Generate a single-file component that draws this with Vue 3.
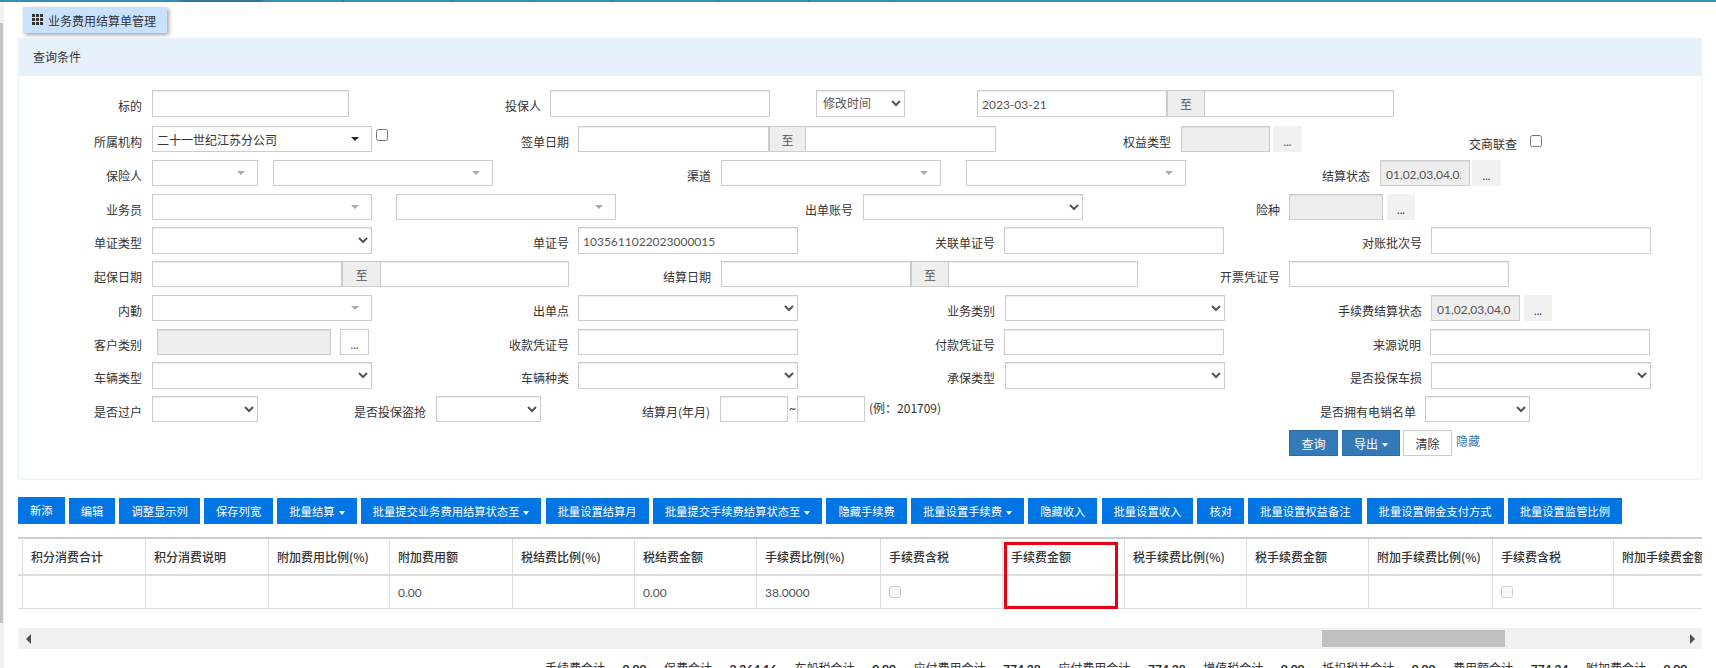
<script setup>
import { computed } from 'vue'

const T = (t, end) => ({ k: 'label', t, end })
const I = (x, end, v = '') => ({ k: 'input', x, end, v })
const D = (x, end, v = '') => ({ k: 'dis', x, end, v })
const S = (x, end, v = '') => ({ k: 'select', x, end, v })
const C = (x, end, v = '') => ({ k: 'combo', x, end, v })
const A = (x, end) => ({ k: 'addon', x, end, v: '至' })
const B = (x, end, framed = false) => ({ k: 'more', x, end, framed })

const source = [
  { h: 27, gap: 14, items: [T('标的', 142), I(152, 349), T('投保人', 541), I(550, 770), S(816, 905, '修改时间'), I(977, 1167, '2023-03-21'), A(1167, 1204), I(1204, 1394)] },
  { h: 26, gap: 9, items: [T('所属机构', 142), C(152, 372, '二十一世纪江苏分公司'), { k: 'check', x: 376, end: 388 }, T('签单日期', 569), I(578, 769), A(769, 805), I(805, 996), T('权益类型', 1171), D(1181, 1270), B(1273, 1302), { k: 'label', t: '交商联查', end: 1517, low: true }, { k: 'check', x: 1530, end: 1542, low: true }] },
  { h: 26, gap: 8, items: [T('保险人', 142), C(152, 258), C(273, 493), T('渠道', 711), C(721, 941), C(966, 1186), T('结算状态', 1370), D(1380, 1470, '01,02,03,04,05'), B(1472, 1501)] },
  { h: 26, gap: 8, items: [T('业务员', 142), C(152, 372), C(396, 616), T('出单账号', 853), S(863, 1083), T('险种', 1280), D(1289, 1383), B(1387, 1415)] },
  { h: 27, gap: 7, items: [T('单证类型', 142), S(152, 372), T('单证号', 569), I(578, 798, '1035611022023000015'), T('关联单证号', 995), I(1004, 1224), T('对账批次号', 1422), I(1431, 1651)] },
  { h: 26, gap: 7, items: [T('起保日期', 142), I(152, 342), A(342, 380), I(380, 569), T('结算日期', 711), I(721, 911), A(911, 948), I(948, 1138), T('开票凭证号', 1280), I(1289, 1509)] },
  { h: 26, gap: 8, items: [T('内勤', 142), C(152, 372), T('出单点', 569), S(578, 798), T('业务类别', 995), S(1005, 1225), T('手续费结算状态', 1422), D(1431, 1520, '01,02,03,04,05'), B(1524, 1552)] },
  { h: 26, gap: 8, items: [T('客户类别', 142), D(157, 331), B(340, 369, true), T('收款凭证号', 569), I(578, 798), T('付款凭证号', 995), I(1004, 1224), T('来源说明', 1421), I(1430, 1650)] },
  { h: 27, gap: 7, items: [T('车辆类型', 142), S(152, 372), T('车辆种类', 569), S(578, 798), T('承保类型', 995), S(1005, 1225), T('是否投保车损', 1422), S(1431, 1651)] },
  { h: 26, gap: 7, items: [T('是否过户', 142), S(152, 258), T('是否投保盗抢', 426), S(436, 541), T('结算月(年月)', 710), I(720, 788), { k: 'tilde', x: 789, end: 797, v: '~' }, I(797, 865), { k: 'note', x: 869, end: 1000, v: '(例：201709)' }, T('是否拥有电销名单', 1416), S(1425, 1530)] }
]

const rows = computed(() =>
  source.map((row) => {
    let prev = 19
    const items = row.items.map((it) => {
      const left = it.k === 'label' ? 0 : it.x - prev
      const width = it.k === 'label' ? it.end - prev : it.end - it.x
      prev = it.end
      return { ...it, style: { marginLeft: left + 'px', width: width + 'px' } }
    })
    return { items, style: { height: row.h + 'px', marginTop: row.gap + 'px' } }
  })
)

const tools = [
  { t: '新添', first: true }, { t: '编辑' }, { t: '调整显示列' }, { t: '保存列宽' },
  { t: '批量结算', caret: true }, { t: '批量提交业务费用结算状态至', caret: true }, { t: '批量设置结算月' },
  { t: '批量提交手续费结算状态至', caret: true }, { t: '隐藏手续费' }, { t: '批量设置手续费', caret: true },
  { t: '隐藏收入' }, { t: '批量设置收入' }, { t: '核对' }, { t: '批量设置权益备注' },
  { t: '批量设置佣金支付方式' }, { t: '批量设置监管比例' }
]

const edges = [18, 23, 146, 269, 390, 513, 635, 757, 881, 1003, 1125, 1247, 1369, 1493, 1614, 1736]
const widths = edges.slice(1).map((e, i) => e - edges[i])
const cols = [
  { h: '' }, { h: '积分消费合计' }, { h: '积分消费说明' }, { h: '附加费用比例(%)' },
  { h: '附加费用额', v: '0.00' }, { h: '税结费比例(%)' }, { h: '税结费金额', v: '0.00' },
  { h: '手续费比例(%)', v: '38.0000' }, { h: '手续费含税', check: true }, { h: '手续费金额' },
  { h: '税手续费比例(%)' }, { h: '税手续费金额' }, { h: '附加手续费比例(%)' },
  { h: '手续费含税', check: true }, { h: '附加手续费金额' }
]

const totals = [
  ['手续费合计', '0.00'], ['保费合计', '2,364.16'], ['车船税合计', '0.00'], ['应付费用合计', '774.38'],
  ['应付费用合计', '774.38'], ['增值税合计', '0.00'], ['抵扣税并合计', '0.00'], ['费用额合计', '774.34'], ['附加费合计', '0.00']
]

const topSegments = [181, 82, 81, 108, 82, 79, 106, 90, 82]
</script>

<template>
  <div class="page">
    <div class="top-bar">
      <span v-for="(w, i) in topSegments" :key="i" class="seg" :class="{ dark: i === 1 }" :style="{ width: w + 'px' }"></span>
    </div>
    <div class="side-track"><div class="side-thumb"></div></div>

    <div class="tab">
      <svg class="tab-icon" width="12" height="12" viewBox="0 0 12 12">
        <g fill="#333">
          <rect x="0" y="0" width="3" height="3" /><rect x="4" y="0" width="3" height="3" /><rect x="8" y="0" width="3" height="3" />
          <rect x="0" y="4" width="3" height="3" /><rect x="4" y="4" width="3" height="3" /><rect x="8" y="4" width="3" height="3" />
          <rect x="0" y="8" width="3" height="3" /><rect x="4" y="8" width="3" height="3" /><rect x="8" y="8" width="3" height="3" />
        </g>
      </svg>
      <span>业务费用结算单管理</span>
    </div>

    <section class="panel">
      <header class="panel-head">查询条件</header>
      <div class="panel-body">
        <div v-for="(row, r) in rows" :key="r" class="row" :style="row.style">
          <template v-for="(it, i) in row.items" :key="i">
            <label v-if="it.k === 'label'" class="label" :class="{ low: it.low }" :style="it.style">{{ it.t }}</label>
            <input v-else-if="it.k === 'input'" class="ctl" type="text" :value="it.v" :style="it.style" />
            <input v-else-if="it.k === 'dis'" class="ctl dis" type="text" disabled :value="it.v" :style="it.style" />
            <select v-else-if="it.k === 'select'" class="ctl sel" :style="it.style">
              <option>{{ it.v }}</option>
            </select>
            <div v-else-if="it.k === 'combo'" class="ctl combo" :class="{ filled: it.v }" :style="it.style">
              <span>{{ it.v }}</span><i class="tri"></i>
            </div>
            <div v-else-if="it.k === 'addon'" class="addon" :style="it.style">{{ it.v }}</div>
            <button v-else-if="it.k === 'more'" class="more" :class="{ framed: it.framed }" type="button" :style="it.style">...</button>
            <input v-else-if="it.k === 'check'" class="check" :class="{ low: it.low }" type="checkbox" :style="it.style" />
            <span v-else-if="it.k === 'tilde'" class="tilde" :style="it.style">{{ it.v }}</span>
            <span v-else-if="it.k === 'note'" class="note" :style="it.style">{{ it.v }}</span>
          </template>
        </div>
        <div class="actions">
          <button class="act primary query" type="button">查询</button>
          <button class="act primary export" type="button">导出<i class="caret"></i></button>
          <button class="act clear" type="button">清除</button>
          <a class="hide-link">隐藏</a>
        </div>
      </div>
    </section>

    <div class="toolbar">
      <button v-for="b in tools" :key="b.t" class="tool" :class="{ first: b.first }" type="button">
        {{ b.t }}<i v-if="b.caret" class="caret"></i>
      </button>
    </div>

    <div class="table-wrap">
      <table class="grid">
        <colgroup><col v-for="(w, i) in widths" :key="i" :style="{ width: w + 'px' }" /></colgroup>
        <thead>
          <tr><th v-for="(c, i) in cols" :key="i">{{ c.h }}</th></tr>
        </thead>
        <tbody>
          <tr>
            <td v-for="(c, i) in cols" :key="i">
              <input v-if="c.check" class="cell-check" type="checkbox" disabled />
              <template v-else>{{ c.v }}</template>
            </td>
          </tr>
        </tbody>
      </table>
      <div class="mark"></div>
    </div>

    <div class="hscroll">
      <i class="arrow left"></i>
      <div class="track"><div class="thumb"></div></div>
      <i class="arrow right"></i>
    </div>

    <div class="totals">
      <span v-for="(t, i) in totals" :key="i" class="total"><span>{{ t[0] }}</span><b>{{ t[1] }}</b></span>
    </div>
  </div>
</template>

<style>
html, body { margin: 0; height: 668px; overflow: hidden; background: #fff; }
</style>

<style scoped>
.page {
  position: relative;
  width: 1716px;
  height: 668px;
  overflow: hidden;
  box-sizing: border-box;
  padding-left: 18px;
  font-family: Lato, "Noto Sans CJK SC", sans-serif;
  font-size: 12px;
  color: #333;
}
.top-bar {
  position: absolute;
  left: 0; top: 0; right: 0;
  height: 2px;
  background: #3a8bb5;
  display: flex;
}
.seg { box-sizing: border-box; height: 2px; border-right: 1px solid #35799f; }
.seg.dark { background: #33799f; }
.side-track { position: absolute; left: 0; top: 2px; bottom: 0; width: 4px; background: #f1f1f1; }
.side-thumb { margin-top: 21px; width: 3px; height: 600px; background: #c4c4c4; }

.tab {
  box-sizing: border-box;
  margin: 7px 0 5px 5px;
  width: 144px;
  height: 26px;
  display: flex;
  align-items: center;
  padding-left: 9px;
  background: #c8e1ff;
  box-shadow: 2px 2px 4px rgba(0, 0, 0, .35);
  white-space: nowrap;
}
.tab-icon { margin-right: 4px; flex: none; }

.panel {
  box-sizing: border-box;
  width: 1684px;
  height: 442px;
  border: 1px solid #e6f1fb;
}
.panel-head {
  height: 37px;
  line-height: 37px;
  padding-left: 14px;
  background: #e6f1fb;
}
.panel-body { display: flow-root; }
.row { display: flex; align-items: stretch; }
.label {
  box-sizing: border-box;
  flex: none;
  font-family: "Noto Sans CJK SC", sans-serif;
  text-align: right;
  line-height: 26px;
  padding-top: 3px;
  white-space: nowrap;
}
.label.low { padding-top: 5px; }
.ctl {
  box-sizing: border-box;
  flex: none;
  height: 100%;
  margin: 0;
  border: 1px solid #ccc;
  border-radius: 0;
  background: #fff;
  padding: 2px 6px 0 4px;
  font: inherit;
  color: #555;
  outline: none;
  box-shadow: inset 0 1px 1px rgba(0, 0, 0, .075);
}
.ctl.dis { background: #eee; color: #555; padding-left: 5px; padding-right: 8px; }
.ctl.sel { padding: 0 2px; }
.combo {
  position: relative;
  display: flex;
  align-items: center;
  padding: 0 4px;
  color: #333;
  box-shadow: none;
}
.tri {
  position: absolute;
  right: 12px;
  top: 50%;
  margin-top: -2px;
  border-left: 4px solid transparent;
  border-right: 4px solid transparent;
  border-top: 4px solid #aaa;
}
.combo.filled .tri { border-top-color: #222; }
.addon {
  box-sizing: border-box;
  flex: none;
  display: flex;
  align-items: center;
  justify-content: center;
  background: #eee;
  border-top: 1px solid #ccc;
  border-bottom: 1px solid #ccc;
  border-left: 1px solid #ccc;
  color: #555;
}
.more {
  box-sizing: border-box;
  flex: none;
  height: 100%;
  padding: 4px 0 0;
  border: 0;
  background: #f1f1f1;
  font: inherit;
  font-size: 11px;
  color: #333;
}
.more.framed { background: #fff; border: 1px solid #ccc; }
.check { flex: none; height: 12px; margin: 3px 0 0; }
.check.low { margin-top: 9px; }
.tilde { flex: none; line-height: 26px; }
.note { flex: none; line-height: 24px; font-family: "Noto Sans CJK SC", sans-serif; }

.actions { display: flex; margin: 8px 0 0 1270px; height: 26px; }
.act {
  box-sizing: border-box;
  height: 26px;
  margin: 0 4px 0 0;
  padding: 0;
  font: inherit;
  border: 1px solid #ccc;
  background: #fff;
  color: #333;
}
.act.primary { background: #337ab7; border-color: #2e6da4; color: #fff; }
.query { width: 49px; }
.export { width: 58px; margin-right: 3px; }
.clear { width: 49px; }
.hide-link { color: #337ab7; line-height: 24px; }

.caret {
  display: inline-block;
  margin-left: 4px;
  vertical-align: middle;
  border-left: 3.5px solid transparent;
  border-right: 3.5px solid transparent;
  border-top: 4px solid #fff;
}

.toolbar { display: flex; align-items: flex-end; gap: 4.1px; margin-top: 17px; height: 27px; }
.tool {
  box-sizing: border-box;
  height: 26px;
  padding: 0 12px;
  border: 0;
  background: #0075e3;
  color: #fff;
  font: inherit;
  font-size: 11.3px;
  white-space: nowrap;
}
.tool.first { height: 27px; padding-bottom: 2px; }

.table-wrap { position: relative; width: 1684px; margin-top: 13px; overflow: hidden; }
.grid { table-layout: fixed; width: 1718px; border-collapse: separate; border-spacing: 0; }
.grid th, .grid td {
  box-sizing: border-box;
  padding: 0 0 0 8px;
  border-right: 1px solid #ddd;
  text-align: left;
  white-space: nowrap;
  overflow: hidden;
}
.grid th {
  height: 39px;
  border-top: 2px solid #ccc;
  border-bottom: 2px solid #ddd;
  font-family: "Noto Sans CJK SC", sans-serif;
  font-weight: 500;
}
.grid td { height: 33px; border-bottom: 1px solid #ddd; color: #555; }
.grid th:first-child, .grid td:first-child { padding: 0; }
.cell-check { display: block; width: 12px; height: 12px; margin: 0; }
.mark {
  position: absolute;
  left: 986px;
  top: 5px;
  width: 114px;
  height: 67px;
  box-sizing: border-box;
  border: 3px solid #e60012;
}

.hscroll {
  display: flex;
  align-items: center;
  width: 1684px;
  height: 21px;
  margin-top: 19px;
  background: #f1f1f1;
}
.arrow { flex: none; width: 0; height: 0; border-top: 5px solid transparent; border-bottom: 5px solid transparent; }
.arrow.left { margin-left: 8px; border-right: 5px solid #505050; }
.arrow.right { margin-right: 7px; border-left: 5px solid #505050; }
.track { flex: 1; height: 17px; }
.thumb { width: 183px; height: 17px; margin-left: 1291px; background: #c1c1c1; }

.totals { display: flex; margin: 11px 0 0 527px; line-height: 17px; white-space: nowrap; }
.total { display: inline-flex; margin-right: 17.6px; }
.total b { margin-left: 17.6px; color: #222; }
</style>
